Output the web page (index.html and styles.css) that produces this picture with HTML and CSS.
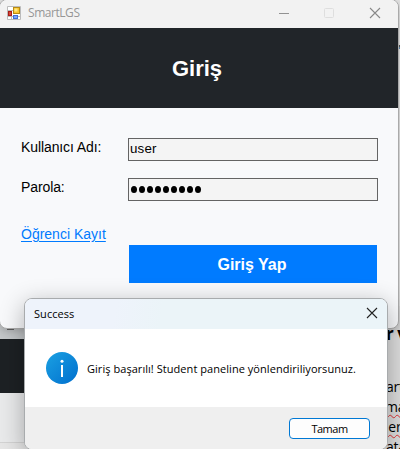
FILE: index.html
```
<!DOCTYPE html>
<html lang="tr">
<head>
<meta charset="utf-8">
<title>SmartLGS</title>
<link rel="stylesheet" href="styles.css">
</head>
<body>
<div class="desktop">
  <div class="backdrop-left"><div class="tab-mark"></div></div>
  <div class="backdrop-right">
    <div class="doc-mark"></div>
    <div class="doc-heading">r v</div>
    <div class="doc-line">art</div>
    <div class="doc-line misspelt">ma</div>
    <div class="doc-line misspelt">ler</div>
    <div class="doc-line">ata</div>
  </div>

  <main class="window">
    <header class="titlebar">
      <svg class="app-icon" width="14" height="14" viewBox="0 0 14 14">
        <path d="M.5.5h13v13H.5zM.5 4.5h6M4.5 9v4.5M9.5 9v4.5M.5 10.5h13" fill="#fff" stroke="#bbb"/>
        <rect x="6.500" y="1.500" width="6" height="6" fill="#f8c52c" stroke="#b88a13"/>
        <rect x="7.500" y="2.500" width="3" height="3" fill="#ffe783"/>
        <rect x="1.500" y="5.500" width="3" height="4" fill="#d94835" stroke="#a81c18"/>
        <rect x="6.500" y="9.500" width="4" height="3" fill="#79a7ff" stroke="#416fd8"/>
      </svg>
      <span class="window-name">SmartLGS</span>
      <svg class="controls" width="104" height="12" viewBox="0 0 104 12" fill="none">
        <path d="M0 6.500h10" stroke="#929292"/>
        <rect x="45.500" y="1.500" width="9" height="9" rx="1" stroke="#dedede"/>
        <path d="M91 1l10 10M101 1L91 11" stroke="#888" stroke-width="1.100"/>
      </svg>
    </header>
    <h1 class="banner">Giriş</h1>
    <form class="login">
      <label for="user">Kullanıcı Adı:</label>
      <div class="field" id="user">user</div>
      <label for="pass">Parola:</label>
      <div class="field password" id="pass"><i></i><i></i><i></i><i></i><i></i><i></i><i></i><i></i><i></i></div>
      <a class="register">Öğrenci Kayıt</a>
      <div class="submit">Giriş Yap</div>
    </form>
  </main>

  <section class="dialog">
    <header class="dialog-title">
      <span>Success</span>
      <svg width="12" height="12" viewBox="0 0 12 12"><path d="M1 1l10 10M11 1L1 11" stroke="#222" stroke-width="1.100"/></svg>
    </header>
    <div class="message">
      <svg width="32" height="32" viewBox="0 0 32 32">
        <defs><linearGradient id="blue" x1="0" y1="0" x2="1" y2="1"><stop offset="0" stop-color="#1ba1e2"/><stop offset="1" stop-color="#006fce"/></linearGradient></defs>
        <circle cx="16" cy="16" r="16" fill="url(#blue)"/>
        <circle cx="16" cy="9.300" r="1.500" fill="#fff"/>
        <path d="M16 13v12" stroke="#fff" stroke-width="2"/>
      </svg>
      <span class="message-text">Giriş başarılı! Student paneline yönlendiriliyorsunuz.</span>
    </div>
    <footer class="actions"><div class="ok">Tamam</div></footer>
  </section>
</div>
</body>
</html>
```
FILE: styles.css
```
* { box-sizing: border-box; }
body { margin: 0; background: #fff; }
.desktop {
  position: relative;
  width: 400px;
  height: 449px;
  overflow: hidden;
  background: #e4e4e4;
  font-family: "Liberation Sans", Arial, sans-serif;
  color: #000;
}
.backdrop-left {
  position: absolute;
  left: 0;
  top: 320px;
  width: 30px;
  height: 129px;
  padding: 8px 0 0 7px;
  background: linear-gradient(#c5c8ca 0 19px, #1d2124 19px 73px, #e9eaeb 73px 122px, #d3d3d3 122px 123px, #e6e6e6 123px);
}
.tab-mark { width: 7px; height: 2px; background: #666; }
.backdrop-right {
  position: absolute;
  left: 380px;
  top: 0;
  width: 20px;
  height: 449px;
  padding: 45px 0 0 7px;
  overflow: hidden;
  white-space: nowrap;
  background: linear-gradient(#e4e4e4 0 306px, #dcdcdc 306px);
}
.doc-mark { width: 20px; height: 4px; margin-bottom: 275px; background: linear-gradient(#555 0 2px, #5b83aa 2px); }
.doc-heading { height: 53px; margin-left: -1px; font: bold 17px/20px "Open Sans", sans-serif; letter-spacing: -.5px; }
.doc-line { height: 20px; margin-left: -1px; font: 14px/20px "Open Sans", sans-serif; letter-spacing: -.2px; }
.misspelt { margin-left: -2px; text-decoration: underline wavy #d33 1px; text-underline-offset: 2px; }

.window {
  position: absolute;
  left: -1px;
  top: -1px;
  width: 400px;
  height: 330px;
  overflow: hidden;
  background: #f8f9fb;
  border: 1px solid #aaa;
  border-radius: 8px;
  box-shadow: 0 2px 8px rgba(0, 0, 0, .2);
}
.titlebar {
  display: flex;
  align-items: center;
  height: 28px;
  padding: 0 15px 3px 7px;
  background: #f2f2f2;
}
.window-name { margin: 1px 0 0 7px; font: 12px/18px "Open Sans", sans-serif; letter-spacing: -.45px; color: #969696; }
.controls { margin-left: auto; }
.banner {
  height: 80px;
  margin: 0;
  padding-right: 4px;
  font-size: 22px;
  line-height: 81px;
  text-align: center;
  color: #fff;
  background: #212529;
}
.login {
  display: grid;
  grid-template-columns: 107px 250px;
  grid-template-rows: 40px 40px 28px 38px;
  padding: 30px 0 0 21px;
  font-size: 14px;
  line-height: 19px;
}
.login label { letter-spacing: -.1px; }
.field {
  height: 23px;
  padding: 1px;
  font-size: 13.333px;
  line-height: 18px;
  letter-spacing: .2px;
  background: #f4f4f4;
  border: 1px solid #646464;
}
.password { display: flex; align-items: center; gap: 2px; padding: 0 2px 1px; }
.password i { width: 6px; height: 7px; border-radius: 50%; background: #000; }
.register { grid-column: 1; grid-row: 3; margin-top: 7px; color: #007bff; text-decoration: underline; text-underline-offset: 2px; white-space: nowrap; }
.submit {
  grid-column: 2;
  grid-row: 4;
  margin: -1px 1px 1px;
  padding-right: 2px;
  height: 38px;
  font-size: 16px;
  font-weight: bold;
  line-height: 39px;
  text-align: center;
  color: #fff;
  background: #007bff;
}

.dialog {
  position: absolute;
  left: 24px;
  top: 298px;
  width: 364px;
  height: 152px;
  overflow: hidden;
  border: 1px solid #a8abad;
  border-radius: 8px;
  background: #fff;
  box-shadow: 0 6px 24px rgba(0, 0, 0, .3);
  font: 11px/16px "Open Sans", sans-serif;
  letter-spacing: .05px;
}
.dialog-title {
  display: flex;
  align-items: center;
  justify-content: space-between;
  height: 30px;
  padding: 0 9px;
  background: linear-gradient(100deg, #eef3fb 25%, #ebf4f8 38%);
}
.dialog-title svg { margin-bottom: 2px; }
.message { display: flex; align-items: center; height: 78px; padding-left: 21px; }
.message-text { margin: 1px 0 0 9px; white-space: nowrap; }
.actions { display: flex; justify-content: flex-end; height: 43px; padding: 11px 17px 0 0; background: #efefef; }
.ok {
  width: 81px;
  height: 21px;
  border: 1px solid #0078d4;
  border-radius: 4px;
  background: #fdfdfd;
  text-align: center;
  line-height: 20px;
  letter-spacing: -.5px;
}
```
